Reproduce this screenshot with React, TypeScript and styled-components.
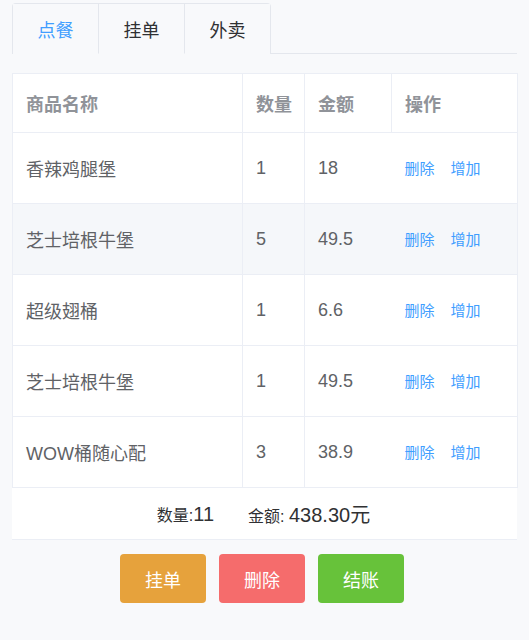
import React from "react";
import styled, { createGlobalStyle } from "styled-components";

const Global = createGlobalStyle`
  html, body { margin: 0; padding: 0; background: #f8f9fb; }
  body { font-family: "Liberation Sans", "Noto Sans CJK SC", sans-serif; }
  * { box-sizing: border-box; }
`;

const Page = styled.div`
  width: 529px;
  min-height: 640px;
  padding: 3px 12px 0 12px;
  background: #f8f9fb;
`;

const TabHeader = styled.div`
  display: flex;
  border-bottom: 1px solid #e4e7ed;
  height: 51px;
`;

const TabNav = styled.div`
  display: flex;
  border: 1px solid #e4e7ed;
  border-bottom: none;
  border-radius: 4px 4px 0 0;
`;

const TabItem = styled.div<{ $active?: boolean; $first?: boolean }>`
  width: ${(p) => (p.$first ? 85 : 86)}px;
  height: 50px;
  display: flex;
  align-items: center;
  justify-content: center;
  font-size: 18px;
  color: ${(p) => (p.$active ? "#409eff" : "#303133")};
  border-left: ${(p) => (p.$first ? "none" : "1px solid #e4e7ed")};
  border-bottom: 1px solid ${(p) => (p.$active ? "#f8f9fb" : "transparent")};
  margin-bottom: -1px;
  background: #f8f9fb;
`;

const Table = styled.table`
  margin-top: 19px;
  width: 505px;
  border-collapse: collapse;
  table-layout: fixed;
  background: #fff;
  border: 1px solid #ebeef5;
`;

const HeadCell = styled.th<{ $w: number; $last?: boolean }>`
  width: ${(p) => p.$w}px;
  height: 59px;
  padding: 0 0 0 13px;
  text-align: left;
  font-size: 18px;
  font-weight: bold;
  color: #909399;
  border-bottom: 1px solid #ebeef5;
  border-right: ${(p) => (p.$last ? "none" : "1px solid #ebeef5")};
`;

const Row = styled.tr<{ $hover?: boolean }>`
  background: ${(p) => (p.$hover ? "#f5f7fa" : "#fff")};
`;

const Cell = styled.td<{ $divider?: boolean }>`
  height: 71px;
  padding: 0 0 0 13px;
  font-size: 18px;
  color: #606266;
  border-bottom: 1px solid #ebeef5;
  border-right: ${(p) => (p.$divider ? "1px solid #ebeef5" : "none")};
`;

const Link = styled.span`
  font-size: 15px;
  color: #409eff;
  margin-right: 16px;
  cursor: pointer;
`;

const Summary = styled.div`
  width: 505px;
  height: 52px;
  background: #fff;
  border-bottom: 1px solid #ebeef5;
  display: flex;
  align-items: center;
  justify-content: center;
  gap: 34px;
  padding-right: 2px;
  color: #303133;
`;

const SumItem = styled.span`
  font-size: 16px;
`;

const SumValue = styled.span`
  font-size: 20px;
`;

const Buttons = styled.div`
  display: flex;
  justify-content: center;
  gap: 13px;
  margin-top: 14px;
  padding-right: 5px;
`;

const Btn = styled.button<{ $bg: string }>`
  width: 86px;
  height: 49px;
  border: none;
  border-radius: 4px;
  background: ${(p) => p.$bg};
  color: #fff;
  font-size: 18px;
  font-family: inherit;
`;

const rows = [
  { name: "香辣鸡腿堡", count: 1, price: "18" },
  { name: "芝士培根牛堡", count: 5, price: "49.5" },
  { name: "超级翅桶", count: 1, price: "6.6" },
  { name: "芝士培根牛堡", count: 1, price: "49.5" },
  { name: "WOW桶随心配", count: 3, price: "38.9" },
];

export default function App() {
  return (
    <Page>
      <Global />
      <TabHeader>
        <TabNav>
          <TabItem $active $first>点餐</TabItem>
          <TabItem>挂单</TabItem>
          <TabItem>外卖</TabItem>
        </TabNav>
      </TabHeader>
      <Table>
        <thead>
          <tr>
            <HeadCell $w={230}>商品名称</HeadCell>
            <HeadCell $w={62}>数量</HeadCell>
            <HeadCell $w={87}>金额</HeadCell>
            <HeadCell $w={126} $last>操作</HeadCell>
          </tr>
        </thead>
        <tbody>
          {rows.map((r, i) => (
            <Row key={i} $hover={i === 1}>
              <Cell $divider>{r.name}</Cell>
              <Cell $divider>{r.count}</Cell>
              <Cell>{r.price}</Cell>
              <Cell>
                <Link>删除</Link>
                <Link>增加</Link>
              </Cell>
            </Row>
          ))}
        </tbody>
      </Table>
      <Summary>
        <SumItem>
          数量:<SumValue>11</SumValue>
        </SumItem>
        <SumItem>
          金额: <SumValue>438.30元</SumValue>
        </SumItem>
      </Summary>
      <Buttons>
        <Btn $bg="#e6a23c">挂单</Btn>
        <Btn $bg="#f56c6c">删除</Btn>
        <Btn $bg="#67c23a">结账</Btn>
      </Buttons>
    </Page>
  );
}
